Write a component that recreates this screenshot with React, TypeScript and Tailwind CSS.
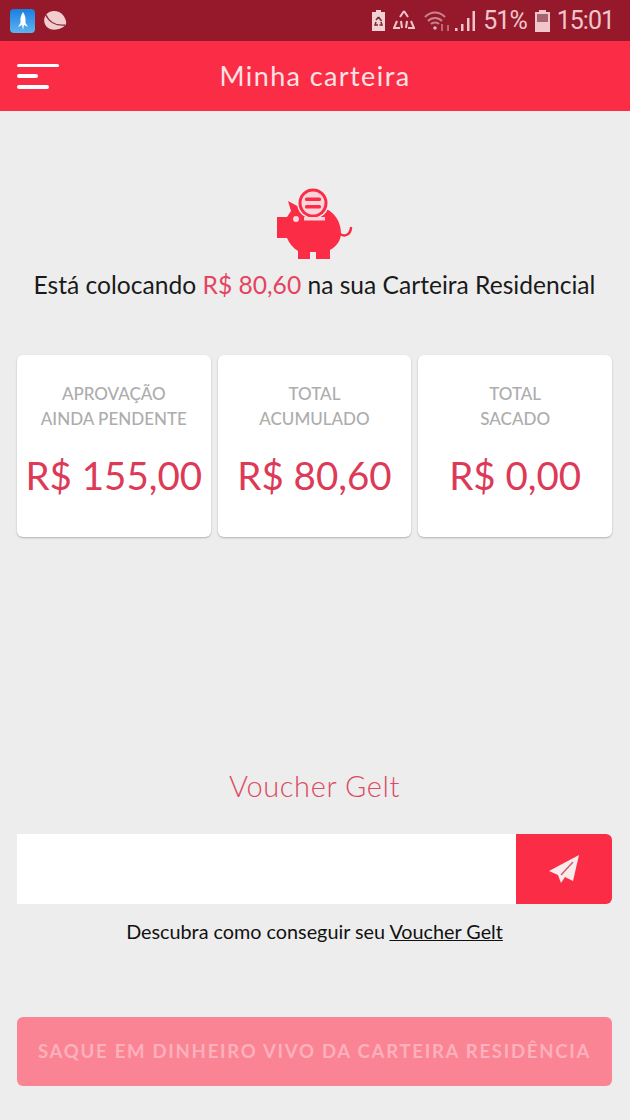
import React from "react";

const font = { fontFamily: '"Lato", "Noto Sans", sans-serif' };
const roboto = { fontFamily: "Roboto, sans-serif" };

function Piggy() {
  return (
    <svg width="76" height="74" viewBox="0 0 76 74" className="block">
      <path d="M11 13 L24 20 C30 17 36 16 42 18 C55 21 64 32 64 45 C64 52 60 58 53 62 L53 71 L39 71 L39 64 L33 64 L33 71 L21 71 L21 63 C16 60 12 55 10 50 L0 50 L0 29 L10 29 L14 23 Z" fill="#fb2c45" />
      <path d="M63 46 C68 49 73 47 74 40" fill="none" stroke="#fb2c45" strokeWidth="2.5" strokeLinecap="round" />
      <circle cx="36" cy="15" r="16" fill="#ededed" />
      <circle cx="36" cy="15" r="14.5" fill="#fb2c45" />
      <circle cx="36" cy="15" r="11.5" fill="#f7d5da" />
      <rect x="28" y="9.5" width="16" height="3.5" rx="1.5" fill="#fb2c45" />
      <rect x="28" y="17" width="16" height="3.5" rx="1.5" fill="#fb2c45" />
      <rect x="27" y="29" width="21" height="3.5" fill="#f7d5da" />
      <circle cx="19" cy="31" r="3" fill="#f7d5da" />
    </svg>
  );
}

function Card({ top, bottom, value }: { top: string; bottom: string; value: string }) {
  return (
    <div className="flex h-[182px] flex-col items-center rounded-md bg-white pt-[26px] shadow-[0_1px_2px_rgba(0,0,0,0.25)]">
      <div className="text-center text-[17px] font-medium leading-[25px] text-[#adadad]">
        <div>{top}</div>
        <div>{bottom}</div>
      </div>
      <div className="mt-[19px] whitespace-nowrap text-[38.5px] leading-[50px] text-[#dc3a57]">{value}</div>
    </div>
  );
}

export default function App() {
  return (
    <div style={font} className="flex h-[1120px] w-[630px] flex-col overflow-hidden bg-[#ededed]">
      <div className="flex h-[41px] items-center justify-between bg-[#95192b] pl-[10px] pr-[16px]">
        <div className="flex items-center gap-[7px]">
          <div className="flex h-[24px] w-[25px] items-center justify-center rounded-[4px] bg-[linear-gradient(#1a7fe0,#5fb3f0)]">
            <svg width="12" height="18" viewBox="0 0 12 18">
              <path d="M6 0 C8 3 9 6 8.5 11 L11 15 L7 13 L6 18 L5 13 L1 15 L3.5 11 C3 6 4 3 6 0 Z" fill="#fff" />
            </svg>
          </div>
          <svg width="25" height="21" viewBox="0 0 25 21">
            <path d="M4 5 C7 0 16 0 20 4 C23 7 25 12 24 14 C22 18 14 21 8 19 C3 17 0 10 4 5 Z" fill="#f2cdd0" />
            <path d="M4 5 C7 12 14 16 23 15" fill="none" stroke="#8d2a38" strokeWidth="1.4" />
          </svg>
        </div>
        <div className="flex items-center text-[#f0c6cb]">
          <svg width="15" height="21" viewBox="0 0 15 21">
            <path d="M5 0 H10 V2 H14 V21 H1 V2 H5 Z" fill="#f3d0d3" />
            <path d="M7.5 7 L10.5 11 M5 12 L4 15 H7 M10 12 L11 15 H8.5 M7.5 7 L5 10" fill="none" stroke="#7a2a35" strokeWidth="1.5" />
          </svg>
          <svg width="22" height="21" viewBox="0 0 22 21" fill="none" stroke="#f0c6cb" strokeWidth="2" className="ml-[7px]">
            <path d="M11 1 L15 7 M11 1 L7 7 M4 11 L1 18 H7 M18 11 L21 18 H15" />
            <path d="M8 11 L9 18 M14 11 L13 18" />
          </svg>
          <svg width="26" height="22" viewBox="0 0 26 22" fill="none" stroke="#c9848d" strokeWidth="2" className="ml-[9px]">
            <path d="M1 7 C7 1 15 1 21 7 M4 11 C8 7 14 7 18 11 M7 14 C9 12 13 12 15 14" />
            <circle cx="11" cy="18" r="1.8" fill="#e0b0b6" stroke="none" />
            <path d="M18 14 V21 M24 21 V15" strokeWidth="1.5" />
          </svg>
          <svg width="20" height="22" viewBox="0 0 20 22" fill="#f0c6cb" className="ml-[5px]">
            <rect x="0" y="18" width="2.5" height="3" />
            <rect x="6" y="14" width="2.5" height="7" />
            <rect x="12" y="8" width="2.5" height="13" />
            <rect x="17.5" y="1" width="2.5" height="20" />
          </svg>
          <span className="ml-[8px] text-[25px] leading-none tracking-[-1px]" style={roboto}>51%</span>
          <svg width="15" height="22" viewBox="0 0 15 22" className="ml-[8px]">
            <path d="M4 0 H11 V2 H15 V22 H0 V2 H4 Z" fill="#f0c6cb" />
            <rect x="2" y="4" width="11" height="8" fill="#a9636f" />
          </svg>
          <span className="ml-[7px] text-[25px] leading-none tracking-[-1px]" style={roboto}>15:01</span>
        </div>
      </div>

      <div className="relative flex h-[70px] items-center justify-center bg-[#fb2c45]">
        <div className="absolute left-[17px] top-[23px] flex flex-col items-start gap-[7px]">
          <div className="h-[3px] w-[42px] rounded-full bg-white" />
          <div className="h-[4px] w-[21px] rounded-full bg-white" />
          <div className="h-[4px] w-[32px] rounded-full bg-white" />
        </div>
        <span className="text-[27px] tracking-[1.4px] text-[#fbe3e6]">Minha carteira</span>
      </div>

      <div className="flex flex-1 flex-col items-center pl-[17px] pr-[18px]">
        <div className="mt-[77px]"><Piggy /></div>
        <p className="mt-[6px] whitespace-nowrap text-[24.6px] leading-[34px] text-[#1a1a1a]">
          Está colocando <span className="text-[#e4445f]">R$ 80,60</span> na sua Carteira Residencial
        </p>
        <div className="mt-[53px] grid w-full grid-cols-3 gap-[7px]">
          <Card top="APROVAÇÃO" bottom="AINDA PENDENTE" value="R$ 155,00" />
          <Card top="TOTAL" bottom="ACUMULADO" value="R$ 80,60" />
          <Card top="TOTAL" bottom="SACADO" value="R$ 0,00" />
        </div>
        <div className="mt-[228px] text-[29px] font-light leading-[42px] tracking-[0.6px] text-[#dc4a63]">Voucher Gelt</div>
        <div className="mt-[27px] flex h-[70px] w-full">
          <div className="flex-1 bg-white" />
          <div className="flex w-[96px] items-center justify-center rounded-r-md bg-[#fb2c45]">
            <svg width="32" height="30" viewBox="0 0 32 30">
              <path d="M1 17 L31 1 L25 27 L17 23 L13 29 L10 21 Z" fill="#f9eaec" />
              <path d="M13 21 L25 8" stroke="#c9626f" strokeWidth="1.5" />
            </svg>
          </div>
        </div>
        <p className="mt-[14px] text-[19.8px] leading-[26px] text-[#111]">
          Descubra como conseguir seu <span className="underline">Voucher Gelt</span>
        </p>
        <div className="mt-[73px] flex h-[69px] w-full items-center justify-center whitespace-nowrap rounded-md bg-[#fb8494] text-[18.6px] font-bold tracking-[1.7px] text-[#fcb1bc]">
          SAQUE EM DINHEIRO VIVO DA CARTEIRA RESIDÊNCIA
        </div>
      </div>
    </div>
  );
}
